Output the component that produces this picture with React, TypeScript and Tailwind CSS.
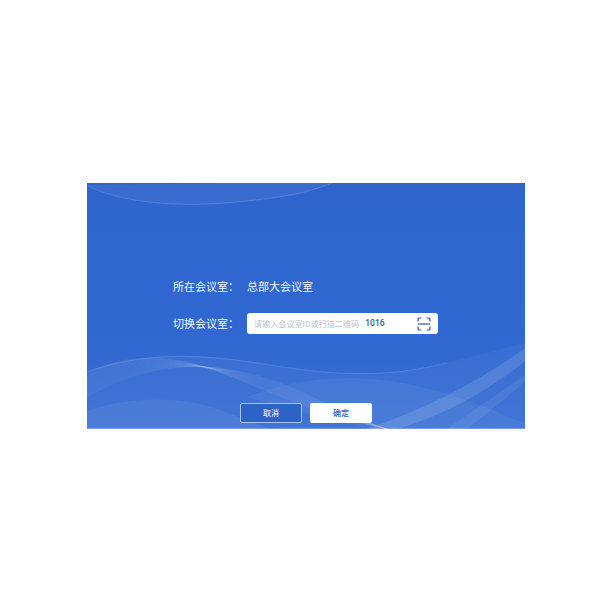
import React from "react";

const font = { fontFamily: '"Noto Sans CJK SC", "Noto Sans", sans-serif' };

function Waves() {
  const mesh: React.ReactElement[] = [];
  for (let i = 0; i < 14; i++) {
    mesh.push(
      <path
        key={i}
        d={`M0 ${214 - i * 1.6} C40 ${190 - i * 1.8} 90 ${176 - i * 0.4} 150 ${188 + i * 0.6} S240 ${226 + i * 0.5} 300 ${246}`}
        fill="none"
        stroke="#ffffff"
        strokeOpacity="0.09"
        strokeWidth="0.7"
      />
    );
  }
  return (
    <svg className="absolute inset-0 w-full h-full" viewBox="0 0 438 246" preserveAspectRatio="none">
      <defs>
        <linearGradient id="bg" x1="0" y1="0" x2="0" y2="1">
          <stop offset="0" stopColor="#3065ce" />
          <stop offset="0.6" stopColor="#3067d0" />
          <stop offset="1" stopColor="#3a70d6" />
        </linearGradient>
      </defs>
      <rect width="438" height="246" fill="url(#bg)" />
      <path d="M0 2 C40 22 100 24 150 19 S220 10 245 0 L130 0 Z" fill="#ffffff" fillOpacity="0.05" />
      <path d="M1 3 C40 22 100 24 150 19 S220 10 245 0" fill="none" stroke="#ffffff" strokeOpacity="0.18" strokeWidth="0.8" />
      <path d="M0 189 C50 170 110 170 170 180 S290 198 360 180 L438 160 L438 246 L0 246 Z" fill="#ffffff" fillOpacity="0.035" />
      <path d="M0 189 C50 170 110 170 170 180 S290 198 360 180" fill="none" stroke="#ffffff" strokeOpacity="0.13" strokeWidth="1.2" />
      {mesh}
      <path d="M0 228 C40 214 90 212 130 226 S180 246 190 246 L0 246 Z" fill="#ffffff" fillOpacity="0.06" />
      <path d="M160 214 C220 190 290 190 350 208 S420 235 438 240 L438 246 L290 246 C250 240 200 225 160 214 Z" fill="#ffffff" fillOpacity="0.05" />
      <path d="M280 246 C340 225 390 200 438 165 L438 178 C400 210 350 235 310 246 Z" fill="#ffffff" fillOpacity="0.12" />
      <path d="M360 246 C390 225 420 205 438 192 L438 198 C420 215 400 230 380 246 Z" fill="#ffffff" fillOpacity="0.07" />
      <rect y="245" width="438" height="1" fill="#ffffff" fillOpacity="0.25" />
    </svg>
  );
}

export default function App() {
  return (
    <div className="w-[612px] h-[612px] bg-white flex items-center justify-center" style={font}>
      <div className="relative w-[438px] h-[246px] overflow-hidden">
        <Waves />
        <div className="relative flex flex-col h-full pt-[92px]">
          <div className="flex items-center h-[22px] text-[11px] leading-none text-white">
            <div className="w-[160px] pl-[86px] whitespace-nowrap text-[#f2f6ff]">所在会议室：</div>
            <div className="text-[#f2f6ff]">总部大会议室</div>
          </div>
          <div className="flex items-center h-[21px] mt-[16px] text-[11px] leading-none">
            <div className="w-[160px] pl-[86px] whitespace-nowrap text-[#f2f6ff]">切换会议室：</div>
            <div className="w-[191px] h-[21px] bg-white rounded-[3px] flex items-center pl-[7px] pr-[7px]">
              <span className="text-[8px] text-[#bcc3ce] whitespace-nowrap tracking-[0.1px]">请输入会议室ID或扫描二维码</span>
              <span className="ml-[6px] text-[8.5px] font-medium text-[#2f5ca8]" style={{ fontFamily: '"Roboto", sans-serif' }}>1016</span>
              <svg className="ml-auto" width="14" height="14" viewBox="0 0 14 14" fill="none" stroke="#2f5ca8" strokeWidth="1.2">
                <path d="M1 4.5 V2 Q1 1 2 1 H4.5" />
                <path d="M9.5 1 H12 Q13 1 13 2 V4.5" />
                <path d="M1 9.5 V12 Q1 13 2 13 H4.5" />
                <path d="M9.5 13 H12 Q13 13 13 12 V9.5" />
                <path d="M1 7 H13" />
              </svg>
            </div>
          </div>
          <div className="flex justify-center gap-[8px] mt-[69px] pr-[0px] ml-[-0px]">
            <button className="w-[62px] h-[20px] rounded-[2px] border border-[#a9c4f0] bg-[#2f62c8] text-[8px] text-white leading-none">取消</button>
            <button className="w-[62px] h-[20px] rounded-[2px] bg-white text-[8px] font-medium text-[#2f62c0] leading-none">确定</button>
          </div>
        </div>
      </div>
    </div>
  );
}
